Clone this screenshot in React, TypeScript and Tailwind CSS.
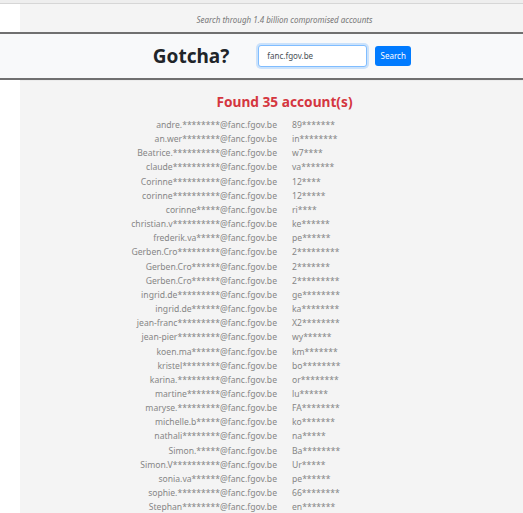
import React from "react";

const rows: [string, string][] = [
  ["andre.********@fanc.fgov.be", "89*******"],
  ["an.wer********@fanc.fgov.be", "in********"],
  ["Beatrice.**********@fanc.fgov.be", "w7****"],
  ["claude**********@fanc.fgov.be", "va*******"],
  ["Corinne**********@fanc.fgov.be", "12****"],
  ["corinne**********@fanc.fgov.be", "12*****"],
  ["corinne*****@fanc.fgov.be", "ri****"],
  ["christian.v**********@fanc.fgov.be", "ke******"],
  ["frederik.va*****@fanc.fgov.be", "pe******"],
  ["Gerben.Cro*********@fanc.fgov.be", "2*********"],
  ["Gerben.Cro******@fanc.fgov.be", "2*******"],
  ["Gerben.Cro******@fanc.fgov.be", "2*********"],
  ["ingrid.de*********@fanc.fgov.be", "ge********"],
  ["ingrid.de******@fanc.fgov.be", "ka********"],
  ["jean-franc*********@fanc.fgov.be", "X2********"],
  ["jean-pier*********@fanc.fgov.be", "wy******"],
  ["koen.ma******@fanc.fgov.be", "km*******"],
  ["kristel********@fanc.fgov.be", "bo********"],
  ["karina.*********@fanc.fgov.be", "or********"],
  ["martine*******@fanc.fgov.be", "lu******"],
  ["maryse.*********@fanc.fgov.be", "FA********"],
  ["michelle.b*****@fanc.fgov.be", "ko*******"],
  ["nathali********@fanc.fgov.be", "na*****"],
  ["Simon.*****@fanc.fgov.be", "Ba********"],
  ["Simon.V**********@fanc.fgov.be", "Ur*****"],
  ["sonia.va******@fanc.fgov.be", "pe******"],
  ["sophie.*********@fanc.fgov.be", "66********"],
  ["Stephan********@fanc.fgov.be", "en*******"],
];

export default function App() {
  return (
    <div
      className="w-[523px] h-[513px] overflow-hidden bg-white flex flex-col"
      style={{ fontFamily: '"Noto Sans", "Open Sans", sans-serif' }}
    >
      <div className="h-[4px] bg-[#eeeeee] border-b border-[#d6d6d6] shrink-0" />
      <div className="flex shrink-0">
        <div className="w-[20px] bg-white" />
        <div className="flex-1 bg-[#f4f4f4] h-[28px] flex items-center justify-center pl-[26px] pt-[3px]">
          <span className="italic text-[8px] text-[#777]">
            Search through 1.4 billion compromised accounts
          </span>
        </div>
      </div>
      <div className="shrink-0 bg-[#f8f9fa] border-y-2 border-[#707070] h-[48px] flex items-center justify-center pl-[41px]">
        <span className="font-bold text-[19px] text-[#212529] leading-none mr-[29px]">Gotcha?</span>
        <div className="w-[109px] h-[22px] rounded-[3px] border border-[#80bdff] shadow-[0_0_0_2px_rgba(0,123,255,0.18)] bg-white flex items-center px-[8px] text-[8px] text-[#495057] mr-[8px]">
          fanc.fgov.be
        </div>
        <div className="h-[20px] w-[36px] rounded-[3px] bg-[#007bff] text-white text-[8px] flex items-center justify-center">
          Search
        </div>
      </div>
      <div className="flex flex-1 min-h-0">
        <div className="w-[20px] bg-white" />
        <div className="flex-1 bg-[#f4f4f4] flex flex-col items-center pl-[26px] pt-[11px] border-t border-[#ececec]">
          <div className="text-[#d4363f] font-bold text-[13.7px] leading-[20px] mb-[6px]">
            Found 35 account(s)
          </div>
          <div className="grid grid-cols-[1fr_1fr] gap-x-[15px] w-full text-[8.6px] text-[#868686] leading-[14.15px]">
            {rows.map(([e, p], i) => (
              <React.Fragment key={i}>
                <div className="text-right whitespace-nowrap">{e}</div>
                <div className="text-left whitespace-nowrap">{p}</div>
              </React.Fragment>
            ))}
          </div>
        </div>
      </div>
    </div>
  );
}
